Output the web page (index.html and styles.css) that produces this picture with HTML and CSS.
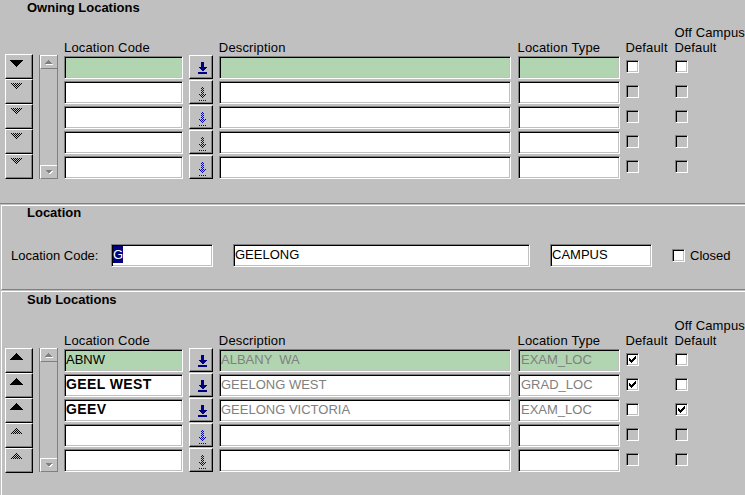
FILE: index.html
```html
<!DOCTYPE html>
<html>
<head>
<meta charset="utf-8">
<link rel="stylesheet" href="styles.css">
</head>
<body>
<svg class="defs" width="0" height="0">
  <defs>
    <pattern id="dk" width="2" height="2" patternUnits="userSpaceOnUse"><rect width="1" height="1" fill="#000"/><rect x="1" y="1" width="1" height="1" fill="#000"/></pattern>
    <pattern id="db" width="2" height="2" patternUnits="userSpaceOnUse"><rect width="1" height="1" fill="#0000c0"/><rect x="1" y="1" width="1" height="1" fill="#0000c0"/></pattern>
  </defs>
</svg>

<section class="sec sec1">
  <div class="title t1">Owning Locations</div>
  <div class="multi m1">
    <div class="hdr">
      <div class="h-code">Location Code</div>
      <div class="h-desc">Description</div>
      <div class="h-type">Location Type</div>
      <div class="h-def">Default</div>
      <div class="h-off">Off Campus<br>Default</div>
    </div>
    <div class="body">
      <div class="nav nav1">
        <div class="nb solid-dn"><svg width="14" height="7"><polygon points="0,0 14,0 7,7" fill="#000"/></svg></div>
        <div class="nb dith"><svg width="14" height="7"><polygon points="0,0 14,0 7,7" fill="url(#dk)"/></svg></div>
        <div class="nb dith"><svg width="14" height="7"><polygon points="0,0 14,0 7,7" fill="url(#dk)"/></svg></div>
        <div class="nb dith"><svg width="14" height="7"><polygon points="0,0 14,0 7,7" fill="url(#dk)"/></svg></div>
        <div class="nb dith"><svg width="14" height="7"><polygon points="0,0 14,0 7,7" fill="url(#dk)"/></svg></div>
      </div>
      <div class="scroll">
        <div class="sb"><svg width="8" height="5"><polygon points="4.5,1 8,4.5 1,4.5" fill="#fff"/><polygon points="3.5,0 7,3.5 0,3.5" fill="#808080"/></svg></div>
        <div class="sb"><svg width="8" height="5"><polygon points="1,1 8,1 4.5,4.5" fill="#fff"/><polygon points="0,0 7,0 3.5,3.5" fill="#808080"/></svg></div>
      </div>
      <div class="rows">
        <div class="row">
          <div class="fld w-code cur"></div>
          <div class="lk"><svg width="9" height="12" fill="#000080"><rect x="3" width="3" height="5"/><polygon points="0,5 9,5 4.5,9.5"/><rect y="10" width="9" height="2"/></svg></div>
          <div class="fld w-desc cur"></div>
          <div class="fld w-type cur"></div>
          <div class="cb c-def"></div>
          <div class="cb c-off"></div>
        </div>
        <div class="row">
          <div class="fld w-code"></div>
          <div class="lk"><svg width="9" height="14"><g fill="url(#db)"><rect x="3" width="3" height="8"/><polygon points="0,7 9,7 4.5,11.5"/><rect y="13" width="9" height="1"/></g></svg></div>
          <div class="fld w-desc"></div>
          <div class="fld w-type"></div>
          <div class="cb c-def dis"></div>
          <div class="cb c-off dis"></div>
        </div>
        <div class="row">
          <div class="fld w-code"></div>
          <div class="lk"><svg width="9" height="14"><g fill="url(#db)"><rect x="3" width="3" height="8"/><polygon points="0,7 9,7 4.5,11.5"/><rect y="13" width="9" height="1"/></g></svg></div>
          <div class="fld w-desc"></div>
          <div class="fld w-type"></div>
          <div class="cb c-def dis"></div>
          <div class="cb c-off dis"></div>
        </div>
        <div class="row">
          <div class="fld w-code"></div>
          <div class="lk"><svg width="9" height="14"><g fill="url(#db)"><rect x="3" width="3" height="8"/><polygon points="0,7 9,7 4.5,11.5"/><rect y="13" width="9" height="1"/></g></svg></div>
          <div class="fld w-desc"></div>
          <div class="fld w-type"></div>
          <div class="cb c-def dis"></div>
          <div class="cb c-off dis"></div>
        </div>
        <div class="row">
          <div class="fld w-code"></div>
          <div class="lk"><svg width="9" height="14"><g fill="url(#db)"><rect x="3" width="3" height="8"/><polygon points="0,7 9,7 4.5,11.5"/><rect y="13" width="9" height="1"/></g></svg></div>
          <div class="fld w-desc"></div>
          <div class="fld w-type"></div>
          <div class="cb c-def dis"></div>
          <div class="cb c-off dis"></div>
        </div>
      </div>
    </div>
  </div>
</section>

<section class="sec sec2">
  <div class="title t2">Location</div>
  <div class="locrow">
    <div class="loclabel">Location Code:</div>
    <div class="fld f1"><span class="sel">G</span></div>
    <div class="fld f2">GEELONG</div>
    <div class="fld f3">CAMPUS</div>
    <div class="cb cb-closed"></div>
    <div class="closed">Closed</div>
  </div>
</section>

<section class="sec sec3">
  <div class="title t3">Sub Locations</div>
  <div class="multi m3">
    <div class="hdr">
      <div class="h-code">Location Code</div>
      <div class="h-desc">Description</div>
      <div class="h-type">Location Type</div>
      <div class="h-def">Default</div>
      <div class="h-off">Off Campus<br>Default</div>
    </div>
    <div class="body">
      <div class="nav">
        <div class="nb solid-up"><svg width="14" height="7"><polygon points="7,0 14,7 0,7" fill="#000"/></svg></div>
        <div class="nb solid-up"><svg width="14" height="7"><polygon points="7,0 14,7 0,7" fill="#000"/></svg></div>
        <div class="nb solid-up"><svg width="14" height="7"><polygon points="7,0 14,7 0,7" fill="#000"/></svg></div>
        <div class="nb dith"><svg width="14" height="7"><polygon points="7,0 14,7 0,7" fill="url(#dk)"/></svg></div>
        <div class="nb dith"><svg width="14" height="7"><polygon points="7,0 14,7 0,7" fill="url(#dk)"/></svg></div>
      </div>
      <div class="scroll">
        <div class="sb"><svg width="8" height="5"><polygon points="4.5,1 8,4.5 1,4.5" fill="#fff"/><polygon points="3.5,0 7,3.5 0,3.5" fill="#808080"/></svg></div>
        <div class="sb"><svg width="8" height="5"><polygon points="1,1 8,1 4.5,4.5" fill="#fff"/><polygon points="0,0 7,0 3.5,3.5" fill="#808080"/></svg></div>
      </div>
      <div class="rows">
        <div class="row">
          <div class="fld w-code cur">ABNW</div>
          <div class="lk"><svg width="9" height="12" fill="#000080"><rect x="3" width="3" height="5"/><polygon points="0,5 9,5 4.5,9.5"/><rect y="10" width="9" height="2"/></svg></div>
          <div class="fld w-desc cur gray">ALBANY  WA</div>
          <div class="fld w-type cur gray">EXAM_LOC</div>
          <div class="cb c-def"><svg width="7" height="7"><rect x="6" y="0" width="1" height="1"/><rect x="5" y="1" width="2" height="1"/><rect x="0" y="2" width="1" height="1"/><rect x="4" y="2" width="3" height="1"/><rect x="0" y="3" width="2" height="1"/><rect x="3" y="3" width="3" height="1"/><rect x="0" y="4" width="5" height="1"/><rect x="1" y="5" width="3" height="1"/><rect x="2" y="6" width="1" height="1"/></svg></div>
          <div class="cb c-off"></div>
        </div>
        <div class="row">
          <div class="fld w-code bold">GEEL WEST</div>
          <div class="lk"><svg width="9" height="12" fill="#000080"><rect x="3" width="3" height="5"/><polygon points="0,5 9,5 4.5,9.5"/><rect y="10" width="9" height="2"/></svg></div>
          <div class="fld w-desc gray">GEELONG WEST</div>
          <div class="fld w-type gray">GRAD_LOC</div>
          <div class="cb c-def"><svg width="7" height="7"><rect x="6" y="0" width="1" height="1"/><rect x="5" y="1" width="2" height="1"/><rect x="0" y="2" width="1" height="1"/><rect x="4" y="2" width="3" height="1"/><rect x="0" y="3" width="2" height="1"/><rect x="3" y="3" width="3" height="1"/><rect x="0" y="4" width="5" height="1"/><rect x="1" y="5" width="3" height="1"/><rect x="2" y="6" width="1" height="1"/></svg></div>
          <div class="cb c-off"></div>
        </div>
        <div class="row">
          <div class="fld w-code bold">GEEV</div>
          <div class="lk"><svg width="9" height="12" fill="#000080"><rect x="3" width="3" height="5"/><polygon points="0,5 9,5 4.5,9.5"/><rect y="10" width="9" height="2"/></svg></div>
          <div class="fld w-desc gray">GEELONG VICTORIA</div>
          <div class="fld w-type gray">EXAM_LOC</div>
          <div class="cb c-def"></div>
          <div class="cb c-off"><svg width="7" height="7"><rect x="6" y="0" width="1" height="1"/><rect x="5" y="1" width="2" height="1"/><rect x="0" y="2" width="1" height="1"/><rect x="4" y="2" width="3" height="1"/><rect x="0" y="3" width="2" height="1"/><rect x="3" y="3" width="3" height="1"/><rect x="0" y="4" width="5" height="1"/><rect x="1" y="5" width="3" height="1"/><rect x="2" y="6" width="1" height="1"/></svg></div>
        </div>
        <div class="row">
          <div class="fld w-code"></div>
          <div class="lk"><svg width="9" height="14"><g fill="url(#db)"><rect x="3" width="3" height="8"/><polygon points="0,7 9,7 4.5,11.5"/><rect y="13" width="9" height="1"/></g></svg></div>
          <div class="fld w-desc"></div>
          <div class="fld w-type"></div>
          <div class="cb c-def dis"></div>
          <div class="cb c-off dis"></div>
        </div>
        <div class="row">
          <div class="fld w-code"></div>
          <div class="lk"><svg width="9" height="14"><g fill="url(#db)"><rect x="3" width="3" height="8"/><polygon points="0,7 9,7 4.5,11.5"/><rect y="13" width="9" height="1"/></g></svg></div>
          <div class="fld w-desc"></div>
          <div class="fld w-type"></div>
          <div class="cb c-def dis"></div>
          <div class="cb c-off dis"></div>
        </div>
      </div>
    </div>
  </div>
</section>
</body>
</html>
```

FILE: styles.css
```css
* { box-sizing: border-box; }
html, body { margin: 0; padding: 0; }
body {
  width: 745px;
  height: 495px;
  overflow: hidden;
  background: #c0c0c0;
  font-family: "Liberation Sans", Arial, sans-serif;
  font-size: 13px;
  line-height: 15px;
  color: #000;
}
svg { shape-rendering: crispEdges; }
.defs { display: block; }

.sec1 { height: 204px; border-bottom: 1px solid #808080; }
.sec2 {
  height: 85px;
  margin-top: 1px;
  margin-left: 1px;
  border-top: 1px solid #fff;
  border-left: 1px solid #fff;
  border-bottom: 1px solid #808080;
}
.sec3 {
  height: 204px;
  margin-top: 1px;
  margin-left: 1px;
  border-top: 1px solid #fff;
  border-left: 1px solid #fff;
}

.title { font-weight: bold; height: 15px; white-space: nowrap; }
.t1 { margin-left: 27px; }
.t2 { margin-left: 25px; margin-top: -1px; }
.t3 { margin-left: 25px; }

.m1 { margin-left: 5px; }
.m3 { margin-left: 3px; }

.hdr {
  display: flex;
  align-items: flex-end;
  height: 30px;
  margin-left: 59px;
  white-space: nowrap;
  letter-spacing: 0.15px;
}
.m1 .hdr { margin-top: 10px; }
.m3 .hdr { margin-top: 11px; }
.h-code { width: 155px; }
.h-desc { width: 299px; }
.h-type { width: 108px; }
.h-def { width: 49px; }

.body { display: flex; align-items: flex-start; }

.nav { width: 28px; display: flex; flex-direction: column; }
.nav1 { margin-top: -1px; }
.nb {
  width: 28px;
  height: 25px;
  border: 1px solid;
  border-color: #fff #000 #000 #fff;
  box-shadow: inset -1px -1px #808080;
  padding-left: 3px;
  display: flex;
  align-items: flex-start;
}
.nb svg { display: block; }
.solid-dn { padding-top: 5px; }
.solid-up { padding-top: 4px; }
.dith { padding-top: 3px; }

.scroll {
  margin-left: 6px;
  width: 19px;
  height: 124px;
  border-left: 1px solid #808080;
  border-right: 1px solid #808080;
  display: flex;
  flex-direction: column;
  justify-content: space-between;
}
.sb {
  width: 17px;
  height: 14px;
  border-top: 1px solid #fff;
  border-left: 1px solid #fff;
  border-bottom: 1px solid #808080;
  display: flex;
  align-items: center;
  justify-content: center;
}
.sb svg { display: block; }

.rows { margin-left: 6px; display: flex; flex-direction: column; }
.row { display: flex; align-items: flex-start; height: 25px; }

.fld {
  height: 23px;
  margin-top: 1px;
  border: 1px solid;
  border-color: #808080 #fff #fff #808080;
  box-shadow: inset 1px 1px #000, inset -1px -1px #c0c0c0;
  background: #fff;
  padding: 1px 0 0 1px;
  line-height: 17px;
  white-space: pre;
  overflow: hidden;
}
.cur { background: #b0d5b0; }
.gray { color: #808080; }
.bold { font-weight: bold; font-size: 14px; letter-spacing: 0.4px; }
.w-code { width: 119px; }
.w-desc { width: 292px; margin-left: 6px; }
.w-type { width: 102px; margin-left: 7px; padding-left: 2px; }

.lk {
  width: 24px;
  height: 24px;
  margin-left: 6px;
  border: 1px solid;
  border-color: #fff #000 #000 #fff;
  box-shadow: inset -1px -1px #808080;
  padding: 6px 0 0 8px;
}
.lk svg { display: block; }

.cb {
  width: 13px;
  height: 13px;
  margin-top: 5px;
  border: 1px solid;
  border-color: #808080 #fff #fff #808080;
  box-shadow: inset 1px 1px #000, inset -1px -1px #c0c0c0;
  background: #fff;
  display: flex;
  align-items: center;
  justify-content: center;
}
.cb svg { display: block; }
.cb.dis { background: #c0c0c0; }
.c-def { margin-left: 6px; }
.c-off { margin-left: 36px; }

.locrow {
  display: flex;
  align-items: center;
  height: 23px;
  margin-top: 24px;
  padding-left: 9px;
  white-space: nowrap;
}
.loclabel { width: 100px; }
.locrow .fld { margin-top: 0; }
.f1 { width: 102px; }
.f2 { width: 297px; margin-left: 20px; }
.f3 { width: 102px; margin-left: 20px; }
.cb-closed { margin-top: 0; margin-left: 20px; }
.closed { margin-left: 5px; }
.sel { background: #000080; color: #fff; display: inline-block; line-height: 17px; }
```
